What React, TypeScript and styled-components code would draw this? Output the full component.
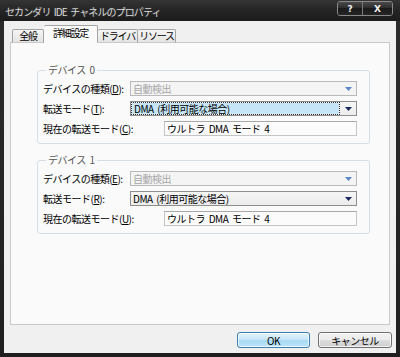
import styled, { createGlobalStyle } from "styled-components";

const GlobalStyle = createGlobalStyle`
  html, body {
    margin: 0;
    padding: 0;
    background: #1e1e1e;
  }
  body {
    font-family: "Noto Sans CJK JP", "Noto Sans", sans-serif;
    font-size: 10px;
    letter-spacing: -0.5px;
    word-spacing: 2px;
  }
`;

const Window = styled.div`
  width: 400px;
  height: 357px;
  display: flex;
  flex-direction: column;
  background: linear-gradient(#2c2c2c, #1f1f1f);
`;

const TitleBar = styled.div`
  height: 21px;
  display: flex;
  align-items: flex-start;
  justify-content: space-between;
  padding: 0 7px 0 5px;
  background: linear-gradient(#343434, #222222 60%, #1c1c1c);
`;

const Title = styled.span`
  color: #d9d9d9;
  line-height: 24px;
  font-size: 10px;
  letter-spacing: -0.9px;
  text-shadow: 0 0 3px rgba(255, 255, 255, 0.15);
`;

const Caption = styled.div`
  display: flex;
  margin-top: 1px;
  border: 1px solid #8a8a8a;
  border-radius: 3px;
  overflow: hidden;
`;

const CaptionButton = styled.div<{ $w: number }>`
  width: ${(p) => p.$w}px;
  height: 13px;
  display: flex;
  align-items: center;
  justify-content: center;
  color: #f0f0f0;
  font-family: "DejaVu Sans", sans-serif;
  font-weight: bold;
  font-size: 9px;
  letter-spacing: 0;
  background: linear-gradient(#4a4a4a, #2a2a2a 50%, #1a1a1a 50%, #262626);
  & + & {
    border-left: 1px solid #7a7a7a;
  }
`;

const Client = styled.div`
  flex: 1;
  margin: 0 4px 4px 4px;
  background: #f0f0f0;
  display: flex;
  flex-direction: column;
  padding: 4px 6px 0 6px;
`;

const TabStrip = styled.div`
  display: flex;
  align-items: flex-end;
  padding-left: 2px;
  margin-bottom: -1px;
  position: relative;
  z-index: 1;
`;

const Tab = styled.div<{ $active?: boolean; $w: number }>`
  width: ${(p) => p.$w}px;
  box-sizing: border-box;
  height: ${(p) => (p.$active ? 18 : 14)}px;
  display: flex;
  align-items: center;
  justify-content: center;
  white-space: nowrap;
  letter-spacing: -1.2px;
  border: 1px solid #a3a3a3;
  border-bottom: ${(p) => (p.$active ? "1px solid #fafafa" : "1px solid #c9c9c9")};
  border-radius: 2px 2px 0 0;
  background: ${(p) =>
    p.$active ? "#fafafa" : "linear-gradient(#f5f5f5, #e4e4e4)"};
  color: #000;
  line-height: 12px;
  padding-bottom: ${(p) => (p.$active ? 2 : 0)}px;
  & + & {
    border-left: none;
  }
`;

const Panel = styled.div`
  height: 283px;
  box-sizing: border-box;
  background: #fafafa;
  border: 1px solid #c9c9c9;
  padding: 21px 19px 0 26px;
  display: flex;
  flex-direction: column;
  gap: 10px;
`;

const Group = styled.fieldset`
  margin: 0;
  border: 1px solid #d6dfe5;
  border-radius: 3px;
  padding: 0 12px 7px 5px;
  display: flex;
  flex-direction: column;
  gap: 5px;
`;

const Legend = styled.legend`
  padding: 0 2px;
  margin-left: 3px;
  color: #555;
  line-height: 12px;
`;

const Row = styled.div<{ $first?: boolean }>`
  display: flex;
  align-items: center;
  height: 15px;
  margin-top: ${(p) => (p.$first ? 5 : 0)}px;
`;

const Label = styled.span<{ $w: number }>`
  width: ${(p) => p.$w}px;
  flex: none;
  color: #000;
  white-space: nowrap;
`;

const Combo = styled.div<{ $disabled?: boolean }>`
  flex: 1;
  height: 15px;
  box-sizing: border-box;
  display: flex;
  border: 1px solid ${(p) => (p.$disabled ? "#b9b9b9" : "#8e8e8e")};
  background: ${(p) =>
    p.$disabled ? "#f4f4f4" : "linear-gradient(#f6f6f6, #ececec)"};
  color: ${(p) => (p.$disabled ? "#a6a6a6" : "#000")};
`;

const ComboText = styled.div<{ $focused?: boolean }>`
  flex: 1;
  display: flex;
  align-items: center;
  padding-left: 2px;
  margin: ${(p) => (p.$focused ? "1px" : "0")};
  background: ${(p) => (p.$focused ? "#c6e5f6" : "transparent")};
  outline: ${(p) => (p.$focused ? "1px dotted #333" : "none")};
  line-height: 12px;
  white-space: nowrap;
`;

const ArrowBox = styled.div`
  width: 16px;
  flex: none;
  display: flex;
  align-items: center;
  justify-content: center;
`;

const TextBox = styled.div`
  flex: 1;
  height: 15px;
  box-sizing: border-box;
  display: flex;
  align-items: center;
  padding-left: 2px;
  border: 1px solid #c5c5c5;
  border-top-color: #a9a9a9;
  background: #fbfbfb;
  color: #000;
  white-space: nowrap;
`;

const Footer = styled.div`
  display: flex;
  justify-content: flex-end;
  gap: 8px;
  padding: 7px 0 0 0;
  margin-right: -2px;
`;

const Button = styled.div<{ $default?: boolean; $w: number }>`
  width: ${(p) => p.$w}px;
  height: 16px;
  box-sizing: border-box;
  display: flex;
  align-items: center;
  justify-content: center;
  border-radius: 3px;
  border: 1px solid ${(p) => (p.$default ? "#3c7fb1" : "#707070")};
  background: ${(p) =>
    p.$default
      ? "linear-gradient(#e5f4fc, #c4e5f6 50%, #a7d9f5 50%, #bde4f8)"
      : "linear-gradient(#f2f2f2, #ebebeb 50%, #dddddd 50%, #cfcfcf)"};
  box-shadow: inset 0 0 0 1px rgba(255, 255, 255, 0.7);
  color: #000;
`;

function Arrow({ color }: { color: string }) {
  return (
    <svg width="7" height="4" viewBox="0 0 7 4">
      <path d="M0 0 H7 L3.5 4 Z" fill={color} />
    </svg>
  );
}

interface DeviceProps {
  index: number;
  keys: [string, string, string];
  focused?: boolean;
}

function DeviceGroup({ index, keys, focused }: DeviceProps) {
  return (
    <Group>
      <Legend>デバイス {index}</Legend>
      <Row $first>
        <Label $w={87}>
          デバイスの種類(<u>{keys[0]}</u>):
        </Label>
        <Combo $disabled>
          <ComboText>自動検出</ComboText>
          <ArrowBox>
            <Arrow color="#5b86c5" />
          </ArrowBox>
        </Combo>
      </Row>
      <Row>
        <Label $w={87}>
          転送モード(<u>{keys[1]}</u>):
        </Label>
        <Combo>
          <ComboText $focused={focused}>DMA (利用可能な場合)</ComboText>
          <ArrowBox>
            <Arrow color="#1b2a5c" />
          </ArrowBox>
        </Combo>
      </Row>
      <Row>
        <Label $w={121}>
          現在の転送モード(<u>{keys[2]}</u>):
        </Label>
        <TextBox>ウルトラ DMA モード 4</TextBox>
      </Row>
    </Group>
  );
}

export default function App() {
  return (
    <>
      <GlobalStyle />
      <Window>
        <TitleBar>
          <Title>セカンダリ IDE チャネルのプロパティ</Title>
          <Caption>
            <CaptionButton $w={24}>?</CaptionButton>
            <CaptionButton $w={29}>X</CaptionButton>
          </Caption>
        </TitleBar>
        <Client>
          <TabStrip>
            <Tab $w={32}>全般</Tab>
            <Tab $w={54} $active>
              詳細設定
            </Tab>
            <Tab $w={40}>ドライバ</Tab>
            <Tab $w={38}>リソース</Tab>
          </TabStrip>
          <Panel>
            <DeviceGroup index={0} keys={["D", "T", "C"]} focused />
            <DeviceGroup index={1} keys={["E", "R", "U"]} />
          </Panel>
          <Footer>
            <Button $w={73} $default>
              OK
            </Button>
            <Button $w={74}>キャンセル</Button>
          </Footer>
        </Client>
      </Window>
    </>
  );
}
